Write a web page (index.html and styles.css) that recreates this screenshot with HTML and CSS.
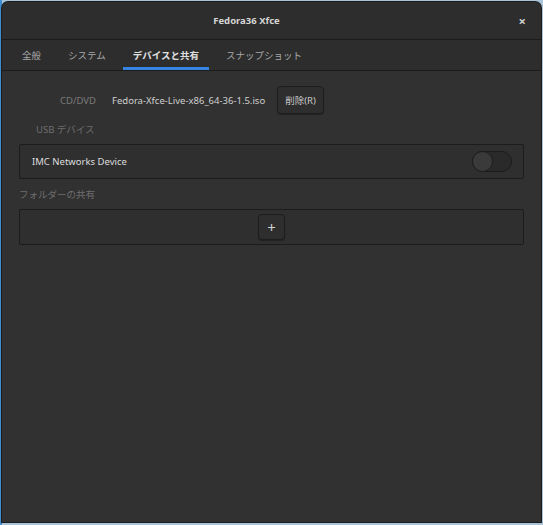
FILE: index.html
```html
<!DOCTYPE html>
<html lang="ja">
<head>
<meta charset="utf-8">
<link rel="stylesheet" href="styles.css">
</head>
<body>
<div class="window">
  <div class="titlebar">
    <span class="title">Fedora36 Xfce</span>
    <span class="close">×</span>
  </div>
  <div class="tabs">
    <span class="tab">全般</span>
    <span class="tab">システム</span>
    <span class="tab active">デバイスと共有</span>
    <span class="tab">スナップショット</span>
  </div>
  <div class="content">
    <div class="cdrow">
      <span class="cdlabel">CD/DVD</span>
      <span class="cdvalue">Fedora-Xfce-Live-x86_64-36-1.5.iso</span>
      <button class="btn">削除(R)</button>
    </div>
    <div class="usblabel">USB デバイス</div>
    <div class="box devbox">
      <span class="devname">IMC Networks Device</span>
      <span class="switch"><span class="knob"></span></span>
    </div>
    <div class="sharelabel">フォルダーの共有</div>
    <div class="box sharebox">
      <button class="btn plus">+</button>
    </div>
  </div>
</div>
</body>
</html>
```
FILE: styles.css
```css
html, body {
  margin: 0;
  padding: 0;
}
body {
  width: 543px;
  height: 525px;
  background: linear-gradient(to right, #3f8fd0 0, #3f8fd0 2px, #a9c3d8 2px);
  font-family: "Noto Sans", "Noto Sans CJK JP", sans-serif;
  font-size: 9.5px;
  overflow: hidden;
  padding: 2px 2px 0 2px;
  box-sizing: border-box;
}
.window {
  width: 539px;
  height: 520px;
  background: #313131;
  border-radius: 6px 6px 0 0;
  box-shadow: 0 0 0 1px #1d1d1d;
  display: flex;
  flex-direction: column;
  overflow: hidden;
}
.titlebar {
  height: 37px;
  flex: none;
  display: flex;
  align-items: center;
  justify-content: center;
  padding-right: 50px;
  position: relative;
  background: #2d2d2d;
  border-bottom: 1px solid #1c1c1c;
}
.title {
  color: #d6d6d6;
  font-weight: bold;
  font-size: 9.5px;
}
.close {
  position: absolute;
  right: 15px;
  top: 10px;
  color: #d0d0d0;
  font-size: 13px;
  font-weight: bold;
}
.tabs {
  height: 30px;
  flex: none;
  display: flex;
  align-items: stretch;
  padding-left: 10px;
  background: #2d2d2d;
  border-bottom: 1px solid #1c1c1c;
}
.tab {
  display: flex;
  align-items: center;
  padding: 2px 10px 0 10px;
  margin-right: 7px;
  color: #a8a8a8;
  border-bottom: 3px solid transparent;
}
.tab.active {
  color: #e0e0e0;
  font-weight: bold;
  border-bottom-color: #3584e4;
}
.content {
  flex: 1;
  padding: 15px 17px 0 17px;
  display: flex;
  flex-direction: column;
}
.cdrow {
  display: flex;
  align-items: center;
  height: 28px;
}
.cdlabel {
  width: 77px;
  text-align: right;
  color: #7a7a7a;
  margin-right: 16px;
}
.cdvalue {
  color: #cfcfcf;
  margin-right: 12px;
}
.btn {
  font-family: inherit;
  font-size: 9.5px;
  color: #c8c8c8;
  background: #2e2e2e;
  border: 1px solid #1d1d1d;
  border-radius: 4px;
  height: 28px;
  padding: 0 7px;
  box-shadow: 0 1px 1px rgba(0,0,0,0.3);
}
.usblabel {
  color: #6e6e6e;
  margin: 8px 0 0 17px;
  height: 16px;
}
.box {
  border: 1px solid #1c1c1c;
  border-radius: 2px;
  background: #2f2f2f;
}
.devbox {
  margin-top: 6px;
  height: 33px;
  display: flex;
  align-items: center;
  justify-content: space-between;
  padding: 0 11px 0 12px;
}
.devname {
  color: #dedede;
}
.switch {
  width: 38px;
  height: 19px;
  border-radius: 11px;
  background: #2a2a2a;
  border: 1px solid #1c1c1c;
  position: relative;
}
.knob {
  position: absolute;
  left: -1px;
  top: -1px;
  width: 19px;
  height: 19px;
  border-radius: 50%;
  background: #3a3a3a;
  border: 1px solid #1d1d1d;
}
.sharelabel {
  color: #6e6e6e;
  margin: 8px 0 0 0;
  height: 16px;
}
.sharebox {
  margin-top: 6px;
  height: 34px;
  display: flex;
  align-items: center;
  justify-content: center;
}
.plus {
  width: 27px;
  height: 26px;
  padding: 0;
  font-size: 15px;
  color: #d0d0d0;
  line-height: 1;
}
```
